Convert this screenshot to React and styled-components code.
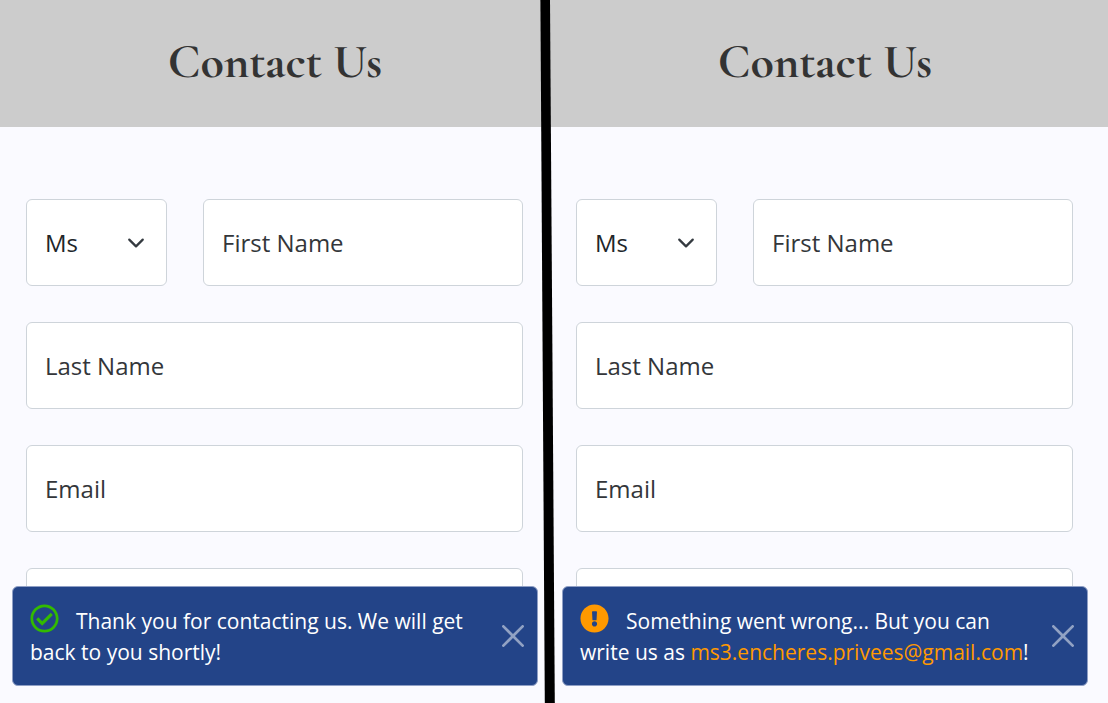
import React from 'react';
import styled, { createGlobalStyle } from 'styled-components';
import { FaRegCheckCircle, FaExclamationCircle } from 'react-icons/fa';

const GlobalStyle = createGlobalStyle`
  *, *::before, *::after { box-sizing: border-box; }
  body {
    margin: 0;
    background: #fafaff;
    color: #212529;
    font-family: "Open Sans", "Noto Sans", sans-serif;
    font-size: 24px;
  }
`;

const Split = styled.div`
  position: relative;
  display: grid;
  grid-template-columns: minmax(0, 1fr) minmax(0, 1fr) 8px;
  height: 100vh;
  overflow: hidden;
`;

const Panel = styled.main`
  position: relative;
  overflow: hidden;
  grid-column: ${(p) => (p.$wide ? 'span 2' : 'span 1')};
  --gutter: ${(p) => (p.$wide ? '8px' : '0px')};
`;

const Header = styled.header`
  display: flex;
  justify-content: center;
  padding: 30px var(--gutter) 33px 0;
  background: #cccccc;
`;

const Title = styled.h1`
  margin: 0;
  font-family: "Cormorant Garamond", "Liberation Serif", serif;
  font-size: 48px;
  font-weight: 700;
  line-height: 64px;
  color: #333333;
`;

const Form = styled.form`
  display: flex;
  flex-direction: column;
  gap: 36px;
  padding: 72px calc(27px + var(--gutter)) 36px 26px;
`;

const Row = styled.div`
  display: flex;
  gap: 36px;
`;

const fieldStyles = `
  width: 100%;
  height: 87px;
  padding: 0 18px;
  border: 1px solid #ced4da;
  border-radius: 6px;
  background: #ffffff;
  color: #212529;
  font: inherit;
`;

const Input = styled.input`
  ${fieldStyles}
  min-width: 0;
  &::placeholder { color: #33363a; opacity: 1; }
`;

const SelectBox = styled.div`
  position: relative;
  flex: 0 0 141px;
`;

const Select = styled.select`
  ${fieldStyles}
  appearance: none;
`;

const Chevron = styled.svg`
  position: absolute;
  right: 22px;
  top: 35px;
  width: 18px;
  height: 18px;
  pointer-events: none;
`;

const Toast = styled.div`
  position: absolute;
  left: 12px;
  right: calc(12px + var(--gutter));
  bottom: 17px;
  display: flex;
  align-items: center;
  justify-content: space-between;
  min-height: 100px;
  padding: 17px 13px 17px 17px;
  border: 1px solid #8f9fc5;
  border-radius: 6px;
  background: #234488;
  color: #ffffff;
`;

const Message = styled.p`
  flex: 0 1 454px;
  margin: 0;
  font-size: 21px;
  font-weight: 500;
  line-height: 31px;

  svg {
    width: 29px;
    height: 29px;
    margin-right: 17px;
    vertical-align: -4px;
    color: ${(p) => p.$tone};
  }
`;

const MailLink = styled.a`
  color: #ff9900;
  font-weight: 400;
  text-decoration: none;
`;

const CloseButton = styled.button`
  display: flex;
  flex: none;
  padding: 0;
  border: 0;
  background: none;
  color: #ffffff;
  opacity: 0.5;
  cursor: pointer;
`;

const Divider = styled.svg`
  position: absolute;
  top: 0;
  left: calc(50% - 14px);
  width: 16px;
  height: 100%;
  pointer-events: none;
`;

function TitleSelect() {
  return (
    <SelectBox>
      <Select aria-label="Title" defaultValue="Ms">
        <option>Ms</option>
        <option>Mr</option>
      </Select>
      <Chevron viewBox="0 0 16 16" fill="none" stroke="#343a40" strokeWidth="2" strokeLinecap="round" strokeLinejoin="round" aria-hidden="true">
        <path d="m2 5 6 6 6-6" />
      </Chevron>
    </SelectBox>
  );
}

function ContactPanel({ wide, icon, tone, children }) {
  return (
    <Panel as={wide ? 'section' : 'main'} $wide={wide}>
      <Header>
        <Title>Contact Us</Title>
      </Header>
      <Form>
        <Row>
          <TitleSelect />
          <Input aria-label="First Name" placeholder="First Name" />
        </Row>
        <Input aria-label="Last Name" placeholder="Last Name" />
        <Input type="email" aria-label="Email" placeholder="Email" />
        <Input type="tel" aria-label="Phone" />
      </Form>
      <Toast role="status">
        <Message $tone={tone}>
          {icon}
          {children}
        </Message>
        <CloseButton type="button" aria-label="Close">
          <svg width="22" height="22" viewBox="0 0 16 16" fill="currentColor" aria-hidden="true">
            <path d="M.293.293a1 1 0 0 1 1.414 0L8 6.586 14.293.293a1 1 0 1 1 1.414 1.414L9.414 8l6.293 6.293a1 1 0 0 1-1.414 1.414L8 9.414l-6.293 6.293a1 1 0 0 1-1.414-1.414L6.586 8 .293 1.707a1 1 0 0 1 0-1.414z" />
          </svg>
        </CloseButton>
      </Toast>
    </Panel>
  );
}

export default function App() {
  return (
    <>
      <GlobalStyle />
      <Split>
        <ContactPanel icon={<FaRegCheckCircle aria-hidden="true" />} tone="#33bb00">
          Thank you for contacting us. We will get back to you shortly!
        </ContactPanel>
        <ContactPanel wide icon={<FaExclamationCircle aria-hidden="true" />} tone="#ff9900">
          Something went wrong... But you can write us as{' '}
          <MailLink href="mailto:ms3.encheres.privees@gmail.com">ms3.encheres.privees@gmail.com</MailLink>!
        </ContactPanel>
        <Divider viewBox="0 0 16 703" preserveAspectRatio="none" aria-hidden="true">
          <polygon points="0.4,0 10,0 14.8,703 4.8,703" fill="#000000" />
        </Divider>
      </Split>
    </>
  );
}
